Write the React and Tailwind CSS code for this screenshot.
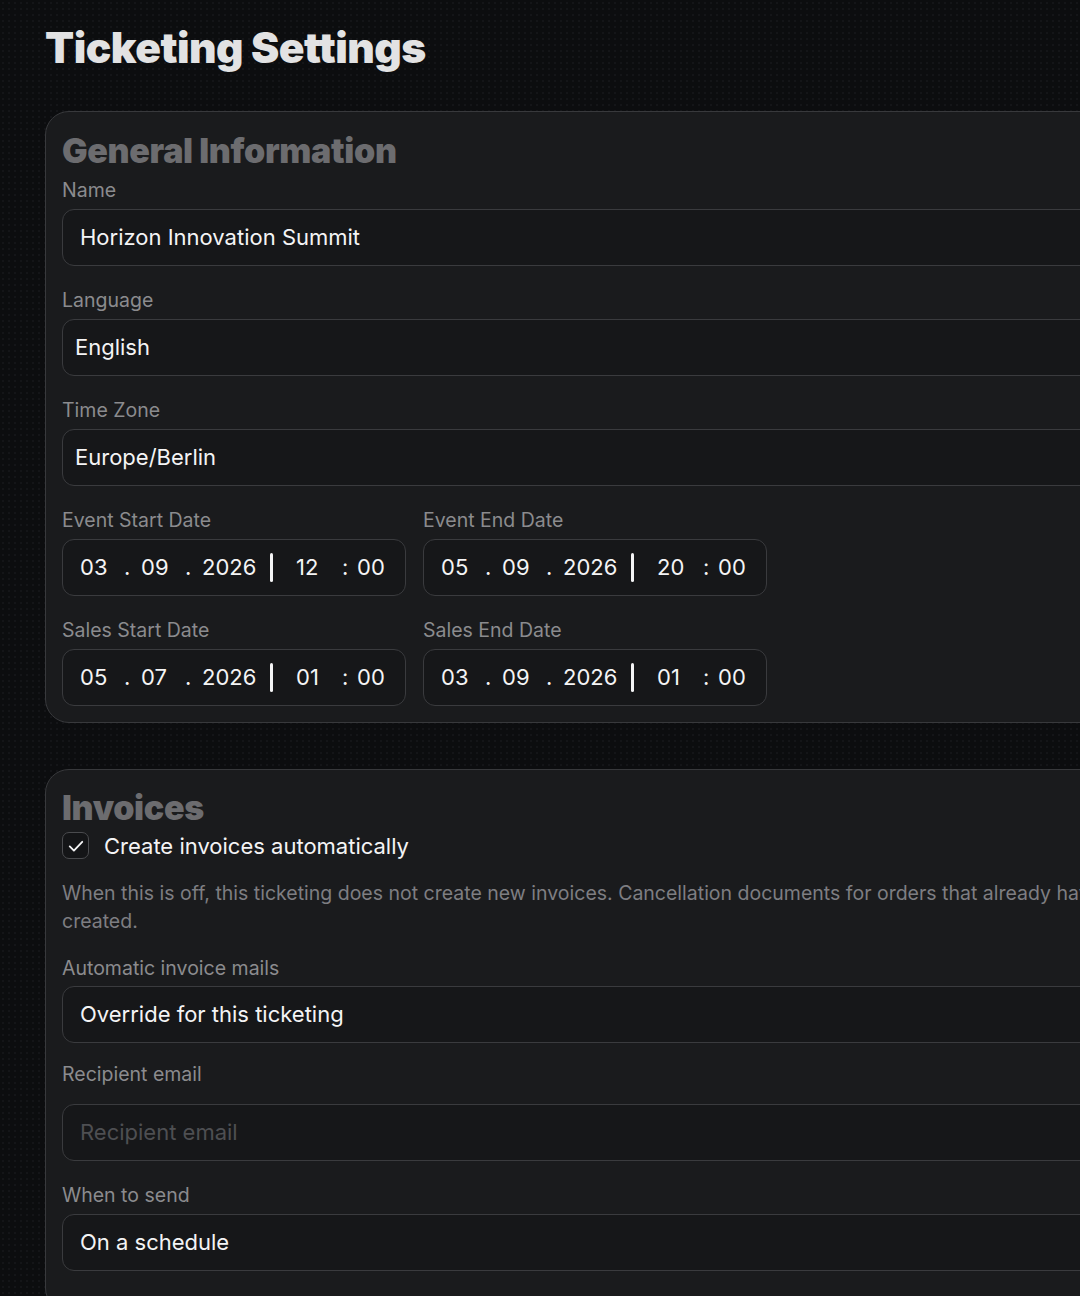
import React from 'react'

function Field({ label, children, labelGap = 'mb-[7px]', className = 'mt-[22px]' }) {
    return (
        <div className={className}>
            <div className={`text-[19.5px] leading-6 text-[#8b8b8e] ${labelGap}`}>{label}</div>
            {children}
        </div>
    )
}

function TextBox({ value, placeholder, pad = 'px-[17px]' }) {
    return (
        <div className={`flex h-[57px] items-center rounded-[12px] border border-[#3a3b3e] bg-[#161719] ${pad} text-[22px]`}>
            {value ? <span className="text-[#f4f4f5]">{value}</span> : <span className="text-[#4e4f52]">{placeholder}</span>}
        </div>
    )
}

function DateBox({ d, m, y, h, min }) {
    return (
        <div className="flex h-[57px] w-[344px] items-center rounded-[12px] border border-[#3a3b3e] bg-[#161719] pl-[17px] text-[22px] text-[#f4f4f5]">
            <span className="w-[44px]">{d}</span>
            <span className="w-[17px]">.</span>
            <span className="w-[44px]">{m}</span>
            <span className="w-[17px]">.</span>
            <span className="w-[68px]">{y}</span>
            <span className="flex w-[26px] items-center">
                <span className="h-[29px] w-[2.5px] rounded-sm bg-[#f4f4f5]"></span>
            </span>
            <span className="w-[46px]">{h}</span>
            <span className="w-[15px]">:</span>
            <span>{min}</span>
        </div>
    )
}

export default function App() {
    return (
        <div className="min-h-screen w-full overflow-hidden bg-[#0c0d0f] bg-[radial-gradient(#141518_1px,transparent_1px)] bg-[size:6px_6px] [font-family:Inter,'Noto_Sans',sans-serif]">
            <div className="w-[1440px] px-[45px] pt-[22px] pb-16">
                <h1 className="text-[42.5px] font-black leading-[52px] tracking-[-0.012em] text-[#e2e2e3]">Ticketing Settings</h1>

                {/* general */}
                <section className="mt-[37px] w-[1314px] rounded-[24px] border border-[#38393c] bg-[#1a1b1d] px-4 pt-[19px] pb-4">
                    <h2 className="text-[34px] font-black leading-[40px] tracking-[-0.01em] text-[#6c6c6f]">General Information</h2>
                    <Field label="Name" className="mt-[7px]">
                        <TextBox value="Horizon Innovation Summit" />
                    </Field>
                    <Field label="Language">
                        <TextBox value="English" pad="px-3" />
                    </Field>
                    <Field label="Time Zone">
                        <TextBox value="Europe/Berlin" pad="px-3" />
                    </Field>
                    <div className="flex gap-[17px]">
                        <Field label="Event Start Date">
                            <DateBox d="03" m="09" y="2026" h="12" min="00" />
                        </Field>
                        <Field label="Event End Date">
                            <DateBox d="05" m="09" y="2026" h="20" min="00" />
                        </Field>
                    </div>
                    <div className="flex gap-[17px]">
                        <Field label="Sales Start Date">
                            <DateBox d="05" m="07" y="2026" h="01" min="00" />
                        </Field>
                        <Field label="Sales End Date">
                            <DateBox d="03" m="09" y="2026" h="01" min="00" />
                        </Field>
                    </div>
                </section>

                {/* invoices */}
                <section className="mt-[46px] w-[1314px] rounded-[24px] border border-[#38393c] bg-[#1a1b1d] px-4 pt-[19px] pb-10">
                    <h2 className="text-[34px] font-black leading-[38px] tracking-[-0.01em] text-[#6c6c6f]">Invoices</h2>
                    <label className="mt-[5px] flex items-center gap-[15px]">
                        <span className="flex h-[27px] w-[27px] items-center justify-center rounded-[7px] border-[1.5px] border-[#4a4b4e] bg-[#141517]">
                            <svg width="20" height="20" viewBox="0 0 24 24" fill="none" stroke="#f4f4f5" strokeWidth="2.2" strokeLinecap="round" strokeLinejoin="round">
                                <path d="M4.5 12.5l5 5L19.5 7" />
                            </svg>
                        </span>
                        <span className="text-[22px] leading-[26px] text-[#f4f4f5]">Create invoices automatically</span>
                    </label>
                    <p className="mt-[20px] text-[19.5px] leading-7 text-[#7e7e82]">
                        When this is off, this ticketing does not create new invoices. Cancellation documents for orders that already have invoices will still be created.
                    </p>
                    <Field label="Automatic invoice mails" labelGap="mb-[6px]" className="mt-[21px]">
                        <TextBox value="Override for this ticketing" />
                    </Field>
                    <Field label="Recipient email" labelGap="mb-[18px]" className="mt-[19px]">
                        <TextBox placeholder="Recipient email" />
                    </Field>
                    <Field label="When to send">
                        <TextBox value="On a schedule" />
                    </Field>
                </section>
            </div>
        </div>
    )
}
